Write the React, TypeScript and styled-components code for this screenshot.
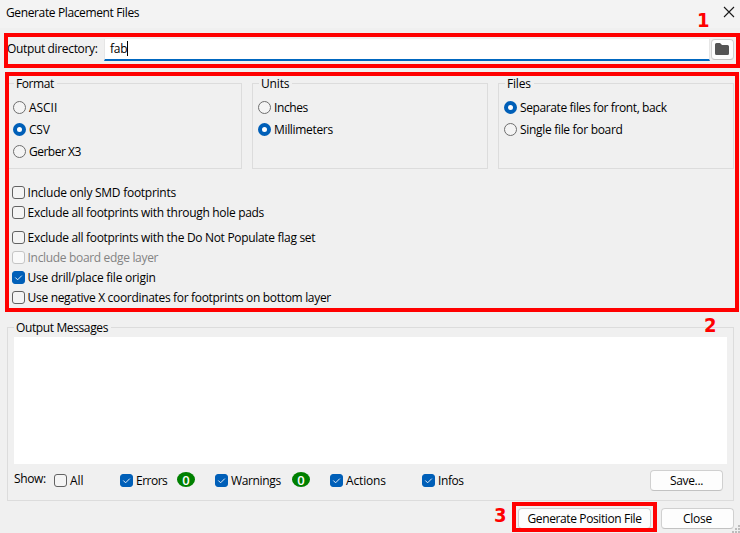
import React from "react";
import styled, { createGlobalStyle } from "styled-components";

const Global = createGlobalStyle`
  * { box-sizing: border-box; }
  html, body { margin: 0; padding: 0; overflow: hidden; background: #f0f0f0; }
`;

const Dialog = styled.div`
  position: relative;
  display: flex;
  flex-direction: column;
  width: 740px;
  height: 533px;
  overflow: hidden;
  background: #f0f0f0;
  color: #000;
  font-family: "Open Sans", "Noto Sans", sans-serif;
  font-size: 12px;
  line-height: 16px;
`;

const Text = styled.span<{ $tracking?: number }>`
  white-space: pre;
  letter-spacing: ${(p) => p.$tracking ?? -0.31}px;
`;

const TitleBar = styled.header`
  display: flex;
  justify-content: space-between;
  height: 28px;
  padding: 5px 5px 0 6px;
  background: #f3f3f3;
`;

const CloseIcon = styled.svg`
  width: 12px;
  height: 12px;
  margin-top: 1px;
`;

const DirectoryRow = styled.div`
  display: flex;
  height: 22px;
  margin: 11px 6px 0 7px;
`;

const DirectoryLabel = styled.label`
  width: 97px;
  padding-top: 2px;
`;

const PathField = styled.div`
  display: flex;
  width: 606px;
  height: 22px;
  padding: 2px 0 0 5px;
  background: #fff;
  border: 1px solid #e6e6e6;
  border-top-width: 0;
  border-bottom: 2px solid #0067c0;
`;

const Caret = styled.i`
  width: 1px;
  height: 15px;
  background: #000;
`;

const Button = styled.button<{ $width: number }>`
  display: flex;
  align-items: center;
  justify-content: center;
  width: ${(p) => p.$width}px;
  height: 21px;
  padding: 0;
  color: #000;
  background: #fdfdfd;
  border: 1px solid #d0d0d0;
  border-bottom-color: #c2c2c2;
  border-radius: 4px;
  font: inherit;
`;

const BrowseButton = styled(Button)`
  margin-left: 1px;
  padding-right: 1px;
  padding-bottom: 1px;
`;

const OptionGroups = styled.div`
  display: flex;
  gap: 10px;
  margin: 15px 0 0 7px;
`;

const Group = styled.fieldset<{ $width: number; $height: number }>`
  display: flex;
  flex-direction: column;
  min-width: 0;
  width: ${(p) => p.$width}px;
  height: ${(p) => p.$height}px;
  margin: 0;
  padding: 0 6px;
  border: 1px solid #dcdcdc;
`;

const Legend = styled.legend`
  height: 15px;
  padding: 0 3px 0 2px;
`;

const RadioList = styled.div`
  display: flex;
  flex-direction: column;
  gap: 6px;
  padding-top: 9px;
  margin-left: -1px;
`;

const Choice = styled.label<{ $disabled?: boolean }>`
  display: flex;
  align-items: flex-start;
  gap: 3px;
  height: 16px;
  color: ${(p) => (p.$disabled ? "#838383" : "#000")};
`;

const RadioMark = styled.span<{ $on?: boolean }>`
  flex: none;
  width: 13px;
  height: 13px;
  margin-top: 1px;
  border-radius: 50%;
  background: ${(p) => (p.$on ? "#fff" : "#f4f4f4")};
  border: ${(p) => (p.$on ? "4px solid #005fb8" : "1px solid #6e6e6e")};
`;

const CheckMark = styled.span<{ $on?: boolean; $disabled?: boolean }>`
  display: flex;
  flex: none;
  width: 13px;
  height: 13px;
  margin-top: 1px;
  border-radius: 3px;
  background: ${(p) => (p.$on ? "#005fb8" : p.$disabled ? "#f9f9f9" : "#f4f4f4")};
  border: 1px solid ${(p) => (p.$on ? "#005fb8" : p.$disabled ? "#c5c5c5" : "#626262")};
`;

const CheckList = styled.div`
  display: flex;
  flex-direction: column;
  margin: 16px 0 0 12px;
  ${Choice} { gap: 2.6px; }
`;

const CheckSet = styled.div`
  display: flex;
  flex-direction: column;
  gap: 4px;
  & + & { margin-top: 9px; }
`;

const MessagesArea = styled.div`
  margin: 14px 0 0 7px;
`;

const MessageLog = styled.div`
  flex: none;
  width: 713px;
  height: 127px;
  margin-top: 2px;
  background: #fff;
`;

const FilterBar = styled.div`
  display: flex;
  width: 713px;
  margin-top: 6px;
`;

const FilterLabel = styled.div`
  width: 40px;
  padding-top: 1px;
`;

const Filter = styled.div<{ $width: number }>`
  display: flex;
  width: ${(p) => p.$width}px;
  padding-top: 3px;
`;

const CheckWidth = styled.div<{ $width: number }>`
  width: ${(p) => p.$width}px;
`;

const Badge = styled.span`
  width: 18px;
  height: 15px;
  margin-top: -1px;
  border-radius: 50%;
  background: #008000;
  color: #fff;
  font-family: "Open Sans", sans-serif;
  font-size: 13px;
  font-weight: 600;
  line-height: 16px;
  text-align: center;
`;

const Actions = styled.footer`
  display: flex;
  gap: 10px;
  justify-content: flex-end;
  padding: 7px 6px 0 0;
`;

const Highlight = styled.div<{ $x: number; $y: number; $w: number; $h: number }>`
  position: absolute;
  left: ${(p) => p.$x}px;
  top: ${(p) => p.$y}px;
  width: ${(p) => p.$w}px;
  height: ${(p) => p.$h}px;
  border: 4px solid #f00;
  pointer-events: none;
`;

const StepNumber = styled.div<{ $x: number; $y: number }>`
  position: absolute;
  left: ${(p) => p.$x}px;
  top: ${(p) => p.$y}px;
  color: #f00;
  font: 700 20px/24px "DejaVu Sans Condensed", "DejaVu Sans", sans-serif;
  font-stretch: condensed;
`;

const ResizeGrip = styled.svg`
  position: absolute;
  right: 0;
  bottom: 0;
  width: 8px;
  height: 8px;
`;

interface ChoiceProps {
  label: string;
  on?: boolean;
  disabled?: boolean;
  tracking?: number;
}

function Radio({ label, on, tracking }: ChoiceProps) {
  return (
    <Choice>
      <RadioMark $on={on} />
      <Text $tracking={tracking}>{label}</Text>
    </Choice>
  );
}

function Check({ label, on, disabled, tracking }: ChoiceProps) {
  return (
    <Choice $disabled={disabled}>
      <CheckMark $on={on} $disabled={disabled}>
        {on && (
          <svg width="11" height="11" viewBox="0 0 11 11" fill="none" stroke="#e4eef8" strokeWidth="1">
            <path d="M2.3 5.5 4.6 7.8 8.8 3.6" />
          </svg>
        )}
      </CheckMark>
      <Text $tracking={tracking}>{label}</Text>
    </Choice>
  );
}

export default function App() {
  return (
    <>
      <Global />
      <Dialog>
        <TitleBar>
          <Text $tracking={-0.37}>Generate Placement Files</Text>
          <CloseIcon viewBox="0 0 12 12" fill="none" stroke="#1a1a1a" strokeWidth="1.1">
            <path d="M1 1 11 11M11 1 1 11" />
          </CloseIcon>
        </TitleBar>

        <DirectoryRow>
          <DirectoryLabel><Text $tracking={-0.35}>Output directory:</Text></DirectoryLabel>
          <PathField><Text $tracking={-0.2}>fab</Text><Caret /></PathField>
          <BrowseButton $width={23} aria-label="Browse">
            <svg width="14" height="12" viewBox="0 0 14 12" fill="#545454">
              <path d="M1.5 0H5L7 2h5.5A1.5 1.5 0 0 1 14 3.5v7a1.5 1.5 0 0 1-1.5 1.5h-11A1.5 1.5 0 0 1 0 10.5v-9A1.5 1.5 0 0 1 1.5 0Z" />
            </svg>
          </BrowseButton>
        </DirectoryRow>

        <OptionGroups>
          <Group $width={235} $height={93}>
            <Legend><Text $tracking={-0.4}>Format</Text></Legend>
            <RadioList>
              <Radio label="ASCII" tracking={-0.05} />
              <Radio label="CSV" tracking={-0.25} on />
              <Radio label="Gerber X3" tracking={-0.5} />
            </RadioList>
          </Group>
          <Group $width={236} $height={93}>
            <Legend><Text $tracking={-0.15}>Units</Text></Legend>
            <RadioList>
              <Radio label="Inches" tracking={-0.4} />
              <Radio label="Millimeters" tracking={-0.33} on />
            </RadioList>
          </Group>
          <Group $width={236} $height={93}>
            <Legend><Text $tracking={-0.2}>Files</Text></Legend>
            <RadioList>
              <Radio label="Separate files for front, back" tracking={-0.38} on />
              <Radio label="Single file for board" />
            </RadioList>
          </Group>
        </OptionGroups>

        <CheckList>
          <CheckSet>
            <Check label="Include only SMD footprints" tracking={-0.26} />
            <Check label="Exclude all footprints with through hole pads" />
          </CheckSet>
          <CheckSet>
            <Check label="Exclude all footprints with the Do Not Populate flag set" />
            <Check label="Include board edge layer" tracking={-0.33} disabled />
            <Check label="Use drill/place file origin" tracking={-0.25} on />
            <Check label="Use negative X coordinates for footprints on bottom layer" tracking={-0.32} />
          </CheckSet>
        </CheckList>

        <MessagesArea>
          <Group $width={727} $height={181}>
            <Legend><Text $tracking={-0.38}>Output Messages</Text></Legend>
            <MessageLog />
            <FilterBar>
              <FilterLabel><Text $tracking={-0.35}>Show:</Text></FilterLabel>
              <Filter $width={66}><Check label="All" tracking={-0.05} /></Filter>
              <Filter $width={95}>
                <CheckWidth $width={57}><Check label="Errors" tracking={-0.5} on /></CheckWidth>
                <Badge>0</Badge>
              </Filter>
              <Filter $width={115}>
                <CheckWidth $width={77}><Check label="Warnings" tracking={-0.35} on /></CheckWidth>
                <Badge>0</Badge>
              </Filter>
              <Filter $width={92}><Check label="Actions" tracking={-0.15} on /></Filter>
              <Filter $width={228}><Check label="Infos" tracking={-0.4} on /></Filter>
              <Button $width={73}><Text $tracking={-0.35}>Save...</Text></Button>
            </FilterBar>
          </Group>
        </MessagesArea>

        <Actions>
          <Button $width={133}><Text $tracking={-0.38}>Generate Position File</Text></Button>
          <Button $width={73}><Text $tracking={-0.25}>Close</Text></Button>
        </Actions>

        <ResizeGrip viewBox="0 0 8 8" fill="#bdbdbd">
          <path d="M6 0h2v2H6zM3 3h2v2H3zM6 3h2v2H6zM0 6h2v2H0zM3 6h2v2H3zM6 6h2v2H6z" />
        </ResizeGrip>
        <Highlight $x={4} $y={33} $w={736} $h={35} />
        <Highlight $x={5} $y={72} $w={734} $h={240} />
        <Highlight $x={512} $y={502} $w={145} $h={30} />
        <StepNumber $x={697} $y={8}>1</StepNumber>
        <StepNumber $x={704} $y={313}>2</StepNumber>
        <StepNumber $x={494} $y={503}>3</StepNumber>
      </Dialog>
    </>
  );
}
